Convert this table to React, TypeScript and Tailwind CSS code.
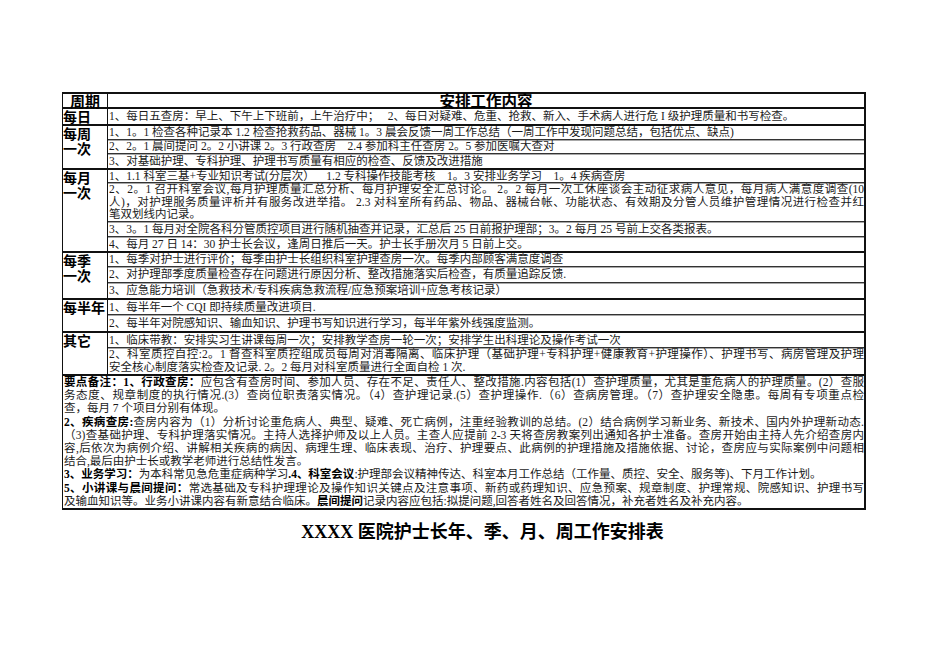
import React from "react";

const bodyFont = "font-['Liberation_Serif','Noto_Sans_CJK_SC',serif]";
const labelFont = "font-['Noto_Sans_CJK_SC',sans-serif]";

function Group({ label, children }: { label: React.ReactNode; children: React.ReactNode }) {
  return (
    <div className="flex border-t-2 border-[#111]">
      <div className={`w-[45px] shrink-0 border-r border-[#111] ${labelFont} font-bold text-[14px] leading-[14.5px] text-black`}>
        {label}
      </div>
      <div className="flex-1 min-w-0 flex flex-col">{children}</div>
    </div>
  );
}

function Row({ h, first, children }: { h: string; first?: boolean; children: React.ReactNode }) {
  return (
    <div
      className={`${h} ${
        first ? "" : "border-t border-[#333] shadow-[inset_0_1px_0_#a8a8a8]"
      } flex flex-col justify-center pl-px overflow-hidden whitespace-pre`}
    >
      {children}
    </div>
  );
}

function J({ children, lh }: { children: React.ReactNode; lh: string }) {
  return <div className={`${lh} whitespace-nowrap text-justify [text-align-last:justify]`}>{children}</div>;
}

function L({ children, lh }: { children: React.ReactNode; lh: string }) {
  return <div className={`${lh} whitespace-pre`}>{children}</div>;
}

function Two({ text }: { text: string }) {
  return <div className="w-[29px] break-all">{text}</div>;
}

export default function App() {
  return (
    <div className={`w-[950px] h-[672px] bg-white overflow-hidden pt-[92px] pl-[62px] ${bodyFont} text-[11.5px] text-[#1a1a1a]`}>
      <div className="w-[804px] border-l border-r-2 border-[#111]">
        {/* header */}
        <div className="flex border-t-2 border-[#111] h-[15px]">
          <div className={`w-[45px] shrink-0 border-r border-[#111] ${labelFont} font-bold text-[15px] leading-[13px] text-black text-center`}>
            周期
          </div>
          <div className={`flex-1 ${labelFont} font-bold text-[15.5px] leading-[13px] text-black text-center`}>安排工作内容</div>
        </div>

        <Group label="每日">
          <Row h="h-[15px] leading-[13px]" first>
            {"1、每日五查房：早上、下午上下班前，上午治疗中；   2、每日对疑难、危重、抢救、新入、手术病人进行危 I 级护理质量和书写检查。"}
          </Row>
        </Group>

        <Group label={<Two text="每周一次" />}>
          <Row h="h-[13px] leading-[13px]" first>
            {"1、1。1 检查各种记录本 1.2 检查抢救药品、器械 1。3 晨会反馈一周工作总结（一周工作中发现问题总结，包括优点、缺点)"}
          </Row>
          <Row h="h-[14px] leading-[13px]">
            {"2、2。1 晨间提问 2。2 小讲课 2。3 行政查房    2.4 参加科主任查房 2。5 参加医嘱大查对"}
          </Row>
          <Row h="h-[15px] leading-[13px]">{"3、对基础护理、专科护理、护理书写质量有相应的检查、反馈及改进措施"}</Row>
        </Group>

        <Group label={<Two text="每月一次" />}>
          <Row h="h-[12px] leading-[12px]" first>
            {"1、1.1 科室三基+专业知识考试(分层次）    1.2 专科操作技能考核    1。3 安排业务学习    1。4 疾病查房"}
          </Row>
          <Row h="h-[39px]">
            <J lh="leading-[12.67px]">
              2、2。1 召开科室会议,每月护理质量汇总分析、每月护理安全汇总讨论。 2。2 每月一次工休座谈会主动征求病人意见，每月病人满意度调查(10
            </J>
            <J lh="leading-[12.67px]">
              人)，对护理服务质量评析并有服务改进举措。 2.3 对科室所有药品、物品、器械台帐、功能状态、有效期及分管人员维护管理情况进行检查并红
            </J>
            <L lh="leading-[12.67px]">笔双划线内记录。</L>
          </Row>
          <Row h="h-[15px] leading-[13px]">
            {"3、3。1 每月对全院各科分管质控项目进行随机抽查并记录，汇总后 25 日前报护理部；3。2 每月 25 号前上交各类报表。"}
          </Row>
          <Row h="h-[15px] leading-[13px]">{"4、每月 27 日 14：30 护士长会议，逢周日推后一天。护士长手册次月 5 日前上交。"}</Row>
        </Group>

        <Group label={<Two text="每季一次" />}>
          <Row h="h-[13px] leading-[13px]" first>
            {"1、每季对护士进行评价；每季由护士长组织科室护理查房一次。每季内部顾客满意度调查"}
          </Row>
          <Row h="h-[16px] leading-[13px]">
            {"2、对护理部季度质量检查存在问题进行原因分析、整改措施落实后检查，有质量追踪反馈."}
          </Row>
          <Row h="h-[16px] leading-[13px]">{"3、应急能力培训（急救技术/专科疾病急救流程/应急预案培训+应急考核记录）"}</Row>
        </Group>

        <Group label="每半年">
          <Row h="h-[14px] leading-[13px]" first>
            {"1、每半年一个 CQI 即持续质量改进项目."}
          </Row>
          <Row h="h-[17px] leading-[13px]">
            {"2、每半年对院感知识、输血知识、护理书写知识进行学习，每半年紫外线强度监测。"}
          </Row>
        </Group>

        <Group label="其它">
          <Row h="h-[14px] leading-[13px]" first>
            {"1、临床带教：安排实习生讲课每周一次；安排教学查房一轮一次；安排学生出科理论及操作考试一次"}
          </Row>
          <Row h="h-[27px]">
            <J lh="leading-[13px]">
              2、科室质控自控:2。1 督查科室质控组成员每周对消毒隔离、临床护理（基础护理+专科护理+健康教育+护理操作）、护理书写、病房管理及护理
            </J>
            <L lh="leading-[13px]">{"安全核心制度落实检查及记录. 2。2 每月对科室质量进行全面自检 1 次."}</L>
          </Row>
        </Group>

        {/* notes */}
        <div className="border-t-2 border-b-2 border-[#111] h-[136px] pl-px">
          <J lh="leading-[13.2px]">
            <b className="font-bold text-black">要点备注：1、行政查房：</b>
            应包含有查房时间、参加人员、存在不足、责任人、整改措施.内容包括(1）查护理质量，尤其是重危病人的护理质量。(2）查服
          </J>
          <J lh="leading-[13.2px]">
            务态度、规章制度的执行情况.(3）查岗位职责落实情况。（4）查护理记录.(5）查护理操作.（6）查病房管理。（7）查护理安全隐患。每周有专项重点检
          </J>
          <L lh="leading-[13.2px]">查，每月 7 个项目分别有体现。</L>
          <J lh="leading-[13.2px]">
            <b className="font-bold text-black">2、疾病查房:</b>
            查房内容为（1）分析讨论重危病人、典型、疑难、死亡病例，注重经验教训的总结。(2）结合病例学习新业务、新技术、国内外护理新动态.
          </J>
          <J lh="leading-[13.2px]">
            （3)查基础护理、专科护理落实情况。主持人选择护师及以上人员。主查人应提前 2-3 天将查房教案列出通知各护士准备。查房开始由主持人先介绍查房内
          </J>
          <J lh="leading-[13.2px]">
            容,后依次为病例介绍、讲解相关疾病的病因、病理生理、临床表现、治疗、护理要点、此病例的护理措施及措施依据、讨论，查房应与实际案例中问题相
          </J>
          <L lh="leading-[13.2px]">结合,最后由护士长或教学老师进行总结性发言。</L>
          <L lh="leading-[13.2px]">
            <b className="font-bold text-black">3、业务学习：</b>
            为本科常见急危重症病种学习
            <b className="font-bold text-black">.4、科室会议</b>
            :护理部会议精神传达、科室本月工作总结（工作量、质控、安全、服务等)、下月工作计划。
          </L>
          <J lh="leading-[13.2px]">
            <b className="font-bold text-black">5、小讲课与晨间提问：</b>
            常选基础及专科护理理论及操作知识关键点及注意事项、新药或药理知识、应急预案、规章制度、护理常规、院感知识、护理书写
          </J>
          <L lh="leading-[13.2px]">
            及输血知识等。业务小讲课内容有新意结合临床。
            <b className="font-bold text-black">晨间提问</b>
            记录内容应包括:拟提问题,回答者姓名及回答情况，补充者姓名及补充内容。
          </L>
        </div>
      </div>

      <div className="w-[841px] mt-[13px] text-center text-[18px] leading-[18px] font-bold text-black">
        XXXX 医院护士长年、季、月、周工作安排表
      </div>
    </div>
  );
}
